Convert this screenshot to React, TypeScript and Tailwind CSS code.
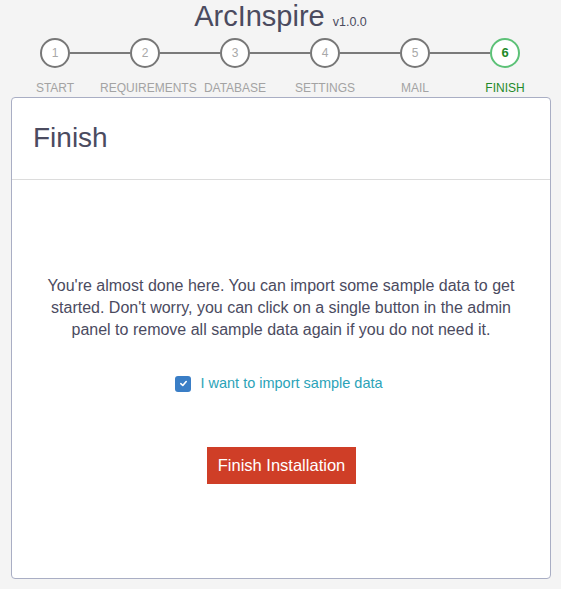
import React from "react";

const steps = ["START", "REQUIREMENTS", "DATABASE", "SETTINGS", "MAIL", "FINISH"];

export default function App() {
  return (
    <div className="min-h-[589px] w-[561px] bg-[#f4f4f4] font-['Liberation_Sans',Arial,sans-serif] overflow-hidden">
      <div className="pt-[1px] h-[31px] flex items-baseline justify-center">
        <span className="text-[29px] leading-[30px] text-[#4b4b5f]">ArcInspire</span>
        <span className="text-[12.5px] leading-[16px] text-[#4b4b5f] ml-[8px]">v1.0.0</span>
      </div>
      <div className="flex items-center pl-[40px] mt-[6px] h-[32px]">
        {steps.map((s, i) => (
          <React.Fragment key={s}>
            {i > 0 && <div className={"h-[2px] w-[60px] bg-[#7a7a7a]"} />}
            <div
              className={
                i === 5
                  ? "w-[30px] h-[30px] rounded-full border-2 border-[#5cc177] bg-white flex items-center justify-center text-[13px] font-bold text-[#1f8a2a]"
                  : "w-[30px] h-[30px] rounded-full border-2 border-[#777777] bg-white flex items-center justify-center text-[12px] text-[#a8a8a8]"
              }
            >
              {i + 1}
            </div>
          </React.Fragment>
        ))}
      </div>
      <div className="grid grid-cols-6 w-[540px] ml-[10px] mt-[12px] h-[15px]">
        {steps.map((s, i) => (
          <div
            key={s}
            className={
              i === 5
                ? "text-center text-[12px] leading-[15px] text-[#1f8a2a]"
                : "text-center text-[12px] leading-[15px] text-[#a3a3a3] whitespace-nowrap"
            }
          >
            {s}
          </div>
        ))}
      </div>
      <div className="ml-[11px] mt-[1px] w-[540px] h-[482px] bg-white border-[1.5px] border-[#a9aec4] rounded-[4px] flex flex-col">
        <div className="h-[82px] border-b border-[#dcdcdc] flex items-center pl-[21px] shrink-0">
          <h1 className="text-[28px] text-[#4b4b5f] leading-[32px] -mt-[1px]">Finish</h1>
        </div>
        <div className="flex flex-col items-center pt-[95px]">
          <p className="text-[16px] leading-[22px] text-[#4b4b5f] text-center">
            You're almost done here. You can import some sample data to get
            <br />
            started. Don't worry, you can click on a single button in the admin
            <br />
            panel to remove all sample data again if you do not need it.
          </p>
          <label className="flex items-center mt-[32px] gap-[9px] -ml-[4px]">
            <span className="w-[16px] h-[16px] rounded-[3px] bg-[#3a7ec6] flex items-center justify-center">
              <svg width="9" height="9" viewBox="0 0 10 10">
                <path d="M2 5.2 L4.2 7.2 L8 2.8" fill="none" stroke="white" strokeWidth="1.8" strokeLinecap="round" strokeLinejoin="round" />
              </svg>
            </span>
            <span className="text-[14.5px] text-[#2ba3b8]">I want to import sample data</span>
          </label>
          <button className="mt-[52px] w-[149px] h-[37px] bg-[#cf3e27] text-white text-[16.5px] ml-[1px]">
            Finish Installation
          </button>
        </div>
      </div>
    </div>
  );
}
